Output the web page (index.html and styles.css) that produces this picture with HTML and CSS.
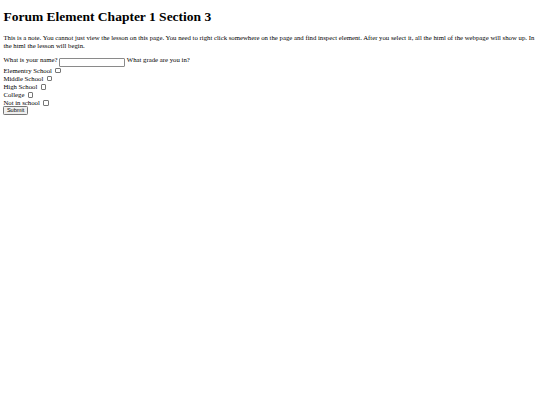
FILE: index.html
```html
<!DOCTYPE html>
<html>
<head>
<meta charset="utf-8">
<link rel="stylesheet" href="styles.css">
</head>
<body class="page">
<h1 class="title">Forum Element Chapter 1 Section 3</h1>
<p class="note">This is a note. You cannot just view the lesson on this page. You need to right click somewhere on the page and find inspect element. After you select it, all the html of the webpage will show up. In the html the lesson will begin.</p>
<form class="form">
<label>What is your name?</label> <input class="text" type="text"> What grade are you in?<br>
Elementry School <input class="check" type="checkbox"><br>
Middle School <input class="check" type="checkbox"><br>
High School <input class="check" type="checkbox"><br>
College <input class="check" type="checkbox"><br>
Not in school <input class="check" type="checkbox"><br>
<button class="submit" type="button">Submit</button>
</form>
</body>
</html>
```
FILE: styles.css
```css
.page {
  margin: 0 3.4px 3.4px 3.4px;
  font-family: "Liberation Serif", "Times New Roman", serif;
  font-size: 6.75px;
  color: #000;
  background: #fff;
}
.title {
  font-size: 13.5px;
  font-weight: bold;
  margin: 9.05px 0;
}
.note {
  margin: 6.75px 0;
  line-height: 7.5px;
}
.form {
  margin: 0;
  line-height: 8.1px;
}
.text {
  box-sizing: border-box;
  width: 66px;
  height: 9.5px;
  padding: 0 1px;
  margin: 0;
  border: 1px solid #8a8a8a;
  border-radius: 1px;
  font-size: 5.6px;
  vertical-align: -2.5px;
}
.check {
  -webkit-appearance: none;
  appearance: none;
  box-sizing: border-box;
  width: 5.5px;
  height: 5.5px;
  margin: 0 1.3px 0 1.7px;
  border: 0.8px solid #767676;
  border-radius: 1px;
  background: #fff;
  vertical-align: -0.3px;
}
.submit {
  font-family: Arial, "Liberation Sans", sans-serif;
  font-size: 5.6px;
  box-sizing: border-box;
  height: 9px;
  padding: 0 2.5px;
  margin: -1.5px 0 0;
  border: 0.8px solid #767676;
  border-radius: 1.3px;
  background: #efefef;
  color: #000;
  line-height: 7px;
  vertical-align: top;
}
```
